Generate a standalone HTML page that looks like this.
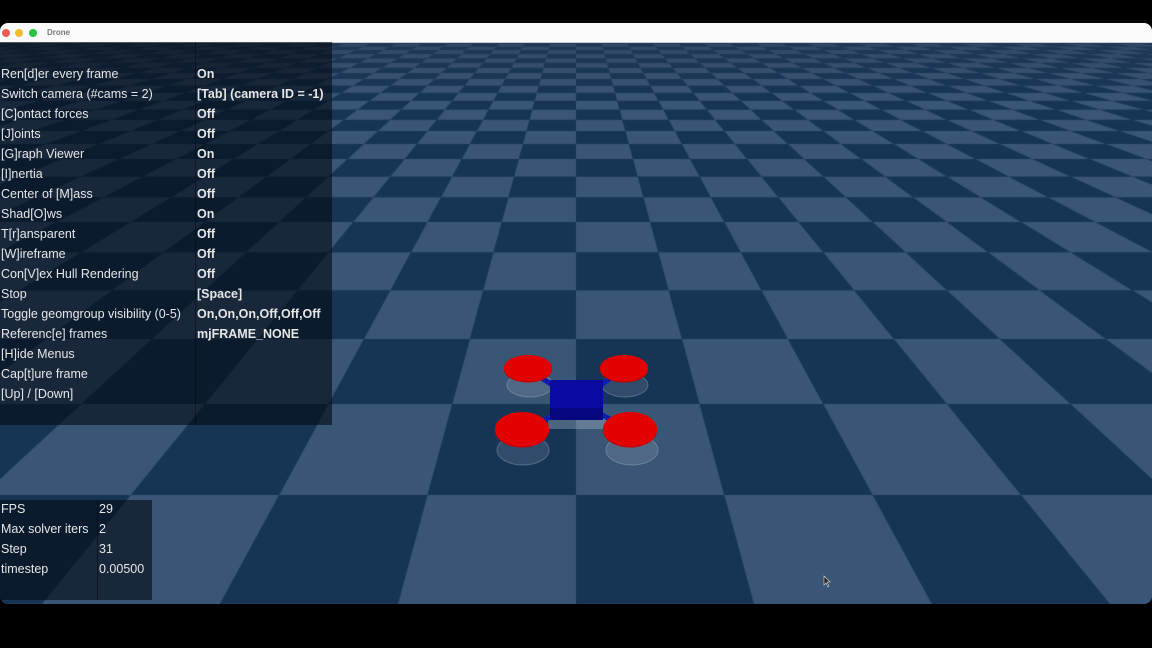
<!DOCTYPE html>
<html><head><meta charset="utf-8"><style>
html,body{margin:0;padding:0;background:#000;width:1152px;height:648px;overflow:hidden;font-family:"Liberation Sans",sans-serif}
#win{position:absolute;left:0;top:23px;width:1152px;height:581px;border-radius:8px;overflow:hidden;background:#1c3a5a}
#title{position:absolute;left:0;top:0;width:1152px;height:19px;background:#fbfbfb;border-bottom:1px solid #ccc}
.dot{position:absolute;top:6px;width:8px;height:8px;border-radius:50%}
#cv{position:absolute;left:0;top:19px}
.panel{position:absolute;background:rgba(5,12,22,0.62);color:#e6e6e6;font-size:12.5px}
.row{position:absolute;left:1px;white-space:nowrap}
.val{position:absolute;white-space:nowrap}
</style></head><body>
<div id="win">
<canvas id="cv" width="1152" height="562"></canvas>
<svg style="position:absolute;left:0;top:0" width="1152" height="581">
 <g transform="translate(0,-23)">
  <g fill="rgba(200,210,225,0.15)" stroke="rgba(220,230,240,0.25)" stroke-width="1">
   <ellipse cx="530" cy="385" rx="23" ry="12"/>
   <ellipse cx="625" cy="385" rx="23" ry="12"/>
   <ellipse cx="523" cy="450" rx="26" ry="15"/>
   <ellipse cx="632" cy="450" rx="26" ry="15"/>
  </g>
  <rect x="548" y="415" width="58" height="14" fill="rgba(200,210,225,0.3)"/>
  <g stroke="#0a1fb0" stroke-width="5">
   <line x1="540" y1="377" x2="560" y2="390"/>
   <line x1="612" y1="377" x2="594" y2="390"/>
   <line x1="540" y1="422" x2="560" y2="412"/>
   <line x1="616" y1="422" x2="596" y2="412"/>
  </g>
  <rect x="550" y="380" width="53" height="40" fill="#0a0aa0"/>
  <rect x="550" y="408" width="53" height="12" fill="#06067e"/>
  <g fill="#c80000">
   <ellipse cx="528" cy="369.5" rx="24" ry="13"/>
   <ellipse cx="624" cy="369.5" rx="24" ry="13"/>
   <ellipse cx="522" cy="430.5" rx="27" ry="17"/>
   <ellipse cx="630" cy="430.5" rx="27" ry="17"/>
  </g>
  <g fill="#e20000">
   <ellipse cx="528" cy="368" rx="24" ry="13"/>
   <ellipse cx="624" cy="368" rx="24" ry="13"/>
   <ellipse cx="522" cy="429" rx="27" ry="17"/>
   <ellipse cx="630" cy="429" rx="27" ry="17"/>
  </g>
  <path d="M824 576 v9 l2-2 2 4 1-1-2-4 3 0z" fill="#222" stroke="#ddd" stroke-width="0.6"/>
 </g>
</svg>
<div id="title">
 <div class="dot" style="left:2px;background:#ee5a52"></div>
 <div class="dot" style="left:15px;background:#f4bd2f"></div>
 <div class="dot" style="left:29px;background:#27c43f"></div>
 <div style="position:absolute;left:47px;top:5px;font-size:8px;font-weight:bold;color:#777">Drone</div>
</div>
<div class="panel" style="left:0;top:19px;width:332px;height:383px">
 <div style="position:absolute;left:195px;top:0;width:1px;height:383px;background:rgba(0,0,0,0.35)"></div>
</div>
<div class="panel" style="left:0;top:477px;width:152px;height:100px">
 <div style="position:absolute;left:97px;top:0;width:1px;height:100px;background:rgba(0,0,0,0.4)"></div>
</div>
</div>
<div id="txt" style="position:absolute;left:0;top:0;color:#e6e6e6;font-size:12.5px"></div>
<script>
var c=document.getElementById('cv').getContext('2d');
var yh=-51,A=2730,C=5,k=178/655;
function Y(n){return yh+A/(n+C);}
function X(i,y){return 576+178*i*(y-yh)/655;}
for(var n=-1;n<400;n++){
 var yb=Y(n),yt=Y(n+1);
 if(yb<42)break;
 var w=(yb-yh)*k; var imax=Math.ceil(700/w)+2;
 for(var i=-imax;i<imax;i++){
  var dark=((i+n+1)%2+2)%2==0;
  c.fillStyle=dark?'#163555':'#3a5676';
  c.beginPath();
  c.moveTo(X(i,yb),yb-42);c.lineTo(X(i+1,yb),yb-42);c.lineTo(X(i+1,yt),yt-42);c.lineTo(X(i,yt),yt-42);c.closePath();c.fill();
 }
}
var g=c.createLinearGradient(0,0,0,60);g.addColorStop(0,'rgba(40,60,85,0.5)');g.addColorStop(1,'rgba(40,60,85,0)');
c.fillStyle=g;c.fillRect(0,0,1152,60);
var L=[["Ren[d]er every frame","On"],["Switch camera (#cams = 2)","[Tab] (camera ID = -1)"],["[C]ontact forces","Off"],["[J]oints","Off"],["[G]raph Viewer","On"],["[I]nertia","Off"],["Center of [M]ass","Off"],["Shad[O]ws","On"],["T[r]ansparent","Off"],["[W]ireframe","Off"],["Con[V]ex Hull Rendering","Off"],["Stop","[Space]"],["Toggle geomgroup visibility (0-5)","On,On,On,Off,Off,Off"],["Referenc[e] frames","mjFRAME_NONE"],["[H]ide Menus",""],["Cap[t]ure frame",""],["[Up] / [Down]",""]];
var h='';
L.forEach(function(r,j){var y=67+20*j;h+='<div class="row" style="top:'+y+'px">'+r[0]+'</div><div class="val" style="left:197px;top:'+y+'px;font-weight:bold">'+r[1]+'</div>';});
var B=[["FPS","29"],["Max solver iters","2"],["Step","31"],["timestep","0.00500"]];
B.forEach(function(r,j){var y=502+20*j;h+='<div class="row" style="top:'+y+'px">'+r[0]+'</div><div class="val" style="left:99px;top:'+y+'px">'+r[1]+'</div>';});
document.getElementById('txt').innerHTML=h;
</script>
</body></html>
